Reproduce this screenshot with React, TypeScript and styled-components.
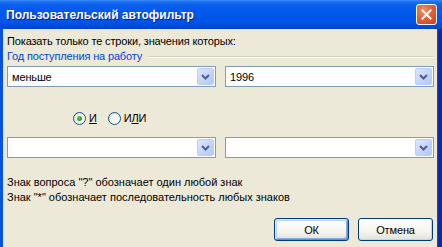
import React from 'react';
import styled, { createGlobalStyle } from 'styled-components';

const GlobalStyle = createGlobalStyle`
  html, body {
    margin: 0;
    padding: 0;
    background: #ece9d8;
  }
  body {
    font-family: 'Liberation Sans', Arial, sans-serif;
    font-size: 11px;
    letter-spacing: -0.15px;
    color: #000;
  }
`;

const Window = styled.div`
  width: 442px;
  height: 247px;
  display: flex;
  flex-direction: column;
  overflow: hidden;
`;

const TitleBar = styled.div`
  height: 29px;
  flex: none;
  display: flex;
  align-items: center;
  justify-content: space-between;
  padding: 0 5px 0 6px;
  box-sizing: border-box;
  background: linear-gradient(
    to bottom,
    #3a8cf8 0px,
    #1a6ef5 2px,
    #0a5fe9 5px,
    #0058ee 12px,
    #0055e8 22px,
    #0049d4 27px,
    #003fc0 29px
  );
`;

const Title = styled.span`
  font-family: 'Liberation Sans', Arial, sans-serif;
  font-weight: bold;
  font-size: 12px;
  letter-spacing: 0;
  color: #fff;
  text-shadow: 1px 1px 0 #0a1e8c;
`;

const CloseButton = styled.div`
  width: 21px;
  height: 21px;
  box-sizing: border-box;
  border: 1px solid #fff;
  border-radius: 3px;
  background: radial-gradient(circle at 35% 30%, #f0936b 0%, #e2603b 45%, #c7421c 100%);
  display: flex;
  align-items: center;
  justify-content: center;
`;

const Body = styled.div`
  flex: 1;
  display: flex;
  flex-direction: column;
  padding: 6px 5px 0 4px;
  border-left: 3px solid #0853de;
  border-right: 4px solid #0a2aa8;
  box-shadow: inset -1px 0 0 #1d46cc;
`;

const TextLine = styled.div<{ $h?: number }>`
  height: ${(p) => p.$h ?? 13}px;
  line-height: ${(p) => p.$h ?? 13}px;
  white-space: nowrap;
`;

const GroupHeader = styled.div`
  margin-top: 2px;
  height: 13px;
  display: flex;
  align-items: center;
`;

const GroupLabel = styled.span`
  color: #0046d5;
  line-height: 13px;
  white-space: nowrap;
`;

const GroupLine = styled.div`
  flex: 1;
  margin-left: 6px;
  height: 0;
  border-top: 1px solid #d0d0bf;
  border-bottom: 1px solid #fff;
`;

const ComboRow = styled.div<{ $top: number }>`
  margin-top: ${(p) => p.$top}px;
  display: grid;
  grid-template-columns: 209px 209px;
  column-gap: 9px;
`;

const Combo = styled.div`
  height: 21px;
  box-sizing: border-box;
  border: 1px solid #7f9db9;
  background: #fff;
  display: flex;
  align-items: center;
  padding: 1px;
`;

const ComboValue = styled.span`
  flex: 1;
  padding-left: 3px;
`;

const DropButton = styled.div`
  width: 17px;
  height: 17px;
  box-sizing: border-box;
  border: 1px solid #b9cdf6;
  border-radius: 2px;
  background: linear-gradient(135deg, #dde7fd 0%, #c6d5fb 50%, #b3c8f6 100%);
  display: flex;
  align-items: center;
  justify-content: center;
`;

const RadioRow = styled.div`
  margin-top: 25px;
  height: 13px;
  display: flex;
  align-items: center;
  padding-left: 66px;
  gap: 11px;
`;

const RadioItem = styled.label`
  display: flex;
  align-items: center;
  gap: 3px;
  line-height: 13px;
`;

const RadioCircle = styled.span<{ $checked?: boolean }>`
  width: 13px;
  height: 13px;
  box-sizing: border-box;
  border-radius: 50%;
  border: 1px solid #1c5180;
  background: radial-gradient(circle at 65% 65%, #ffffff 0%, #f3f2ee 50%, #d6d4c8 100%);
  display: flex;
  align-items: center;
  justify-content: center;
  &::after {
    content: '';
    display: ${(p) => (p.$checked ? 'block' : 'none')};
    width: 5px;
    height: 5px;
    border-radius: 50%;
    background: radial-gradient(circle at 40% 40%, #61d35f 0%, #21a121 60%, #158a15 100%);
  }
`;

const Hints = styled.div`
  margin-top: 17px;
  letter-spacing: 0;
`;

const ButtonRow = styled.div`
  margin-top: 13px;
  display: flex;
  justify-content: flex-end;
  gap: 9px;
`;

const Button = styled.div<{ $default?: boolean }>`
  width: 75px;
  height: 23px;
  box-sizing: border-box;
  border: 1px solid #003c74;
  border-radius: 3px;
  background: linear-gradient(to bottom, #ffffff 0%, #f5f4ef 60%, #e3e0d4 100%);
  box-shadow: ${(p) =>
    p.$default
      ? 'inset 1px 1px 0 #cee7ff, inset -1px -1px 0 #6982ee, inset 2px 2px 0 #bcd4f6, inset -2px -2px 0 #89ade4'
      : 'inset -1px -1px 0 #d6d0c5'};
  display: flex;
  align-items: center;
  justify-content: center;
`;

const Chevron = () => (
  <svg width="9" height="6" viewBox="0 0 9 6">
    <path d="M1 1 L4.5 4.5 L8 1" fill="none" stroke="#4d6185" strokeWidth="2" />
  </svg>
);

const CloseIcon = () => (
  <svg width="11" height="11" viewBox="0 0 11 11">
    <path d="M1.5 1.5 L9.5 9.5 M9.5 1.5 L1.5 9.5" stroke="#fff" strokeWidth="2" strokeLinecap="square" />
  </svg>
);

const ComboBox: React.FC<{ value?: string }> = ({ value }) => (
  <Combo>
    <ComboValue>{value}</ComboValue>
    <DropButton>
      <Chevron />
    </DropButton>
  </Combo>
);

export default function App() {
  return (
    <Window>
      <GlobalStyle />
      <TitleBar>
        <Title>Пользовательский автофильтр</Title>
        <CloseButton>
          <CloseIcon />
        </CloseButton>
      </TitleBar>
      <Body>
        <TextLine>Показать только те строки, значения которых:</TextLine>
        <GroupHeader>
          <GroupLabel>Год поступления на работу</GroupLabel>
          <GroupLine />
        </GroupHeader>
        <ComboRow $top={3}>
          <ComboBox value="меньше" />
          <ComboBox value="1996" />
        </ComboRow>
        <RadioRow>
          <RadioItem>
            <RadioCircle $checked />
            <u>И</u>
          </RadioItem>
          <RadioItem>
            <RadioCircle />
            <span>
              И<u>Л</u>И
            </span>
          </RadioItem>
        </RadioRow>
        <ComboRow $top={12}>
          <ComboBox />
          <ComboBox />
        </ComboRow>
        <Hints>
          <TextLine $h={15}>Знак вопроса "?" обозначает один любой знак</TextLine>
          <TextLine $h={15}>Знак "*" обозначает последовательность любых знаков</TextLine>
        </Hints>
        <ButtonRow>
          <Button $default>ОК</Button>
          <Button>Отмена</Button>
        </ButtonRow>
      </Body>
    </Window>
  );
}
